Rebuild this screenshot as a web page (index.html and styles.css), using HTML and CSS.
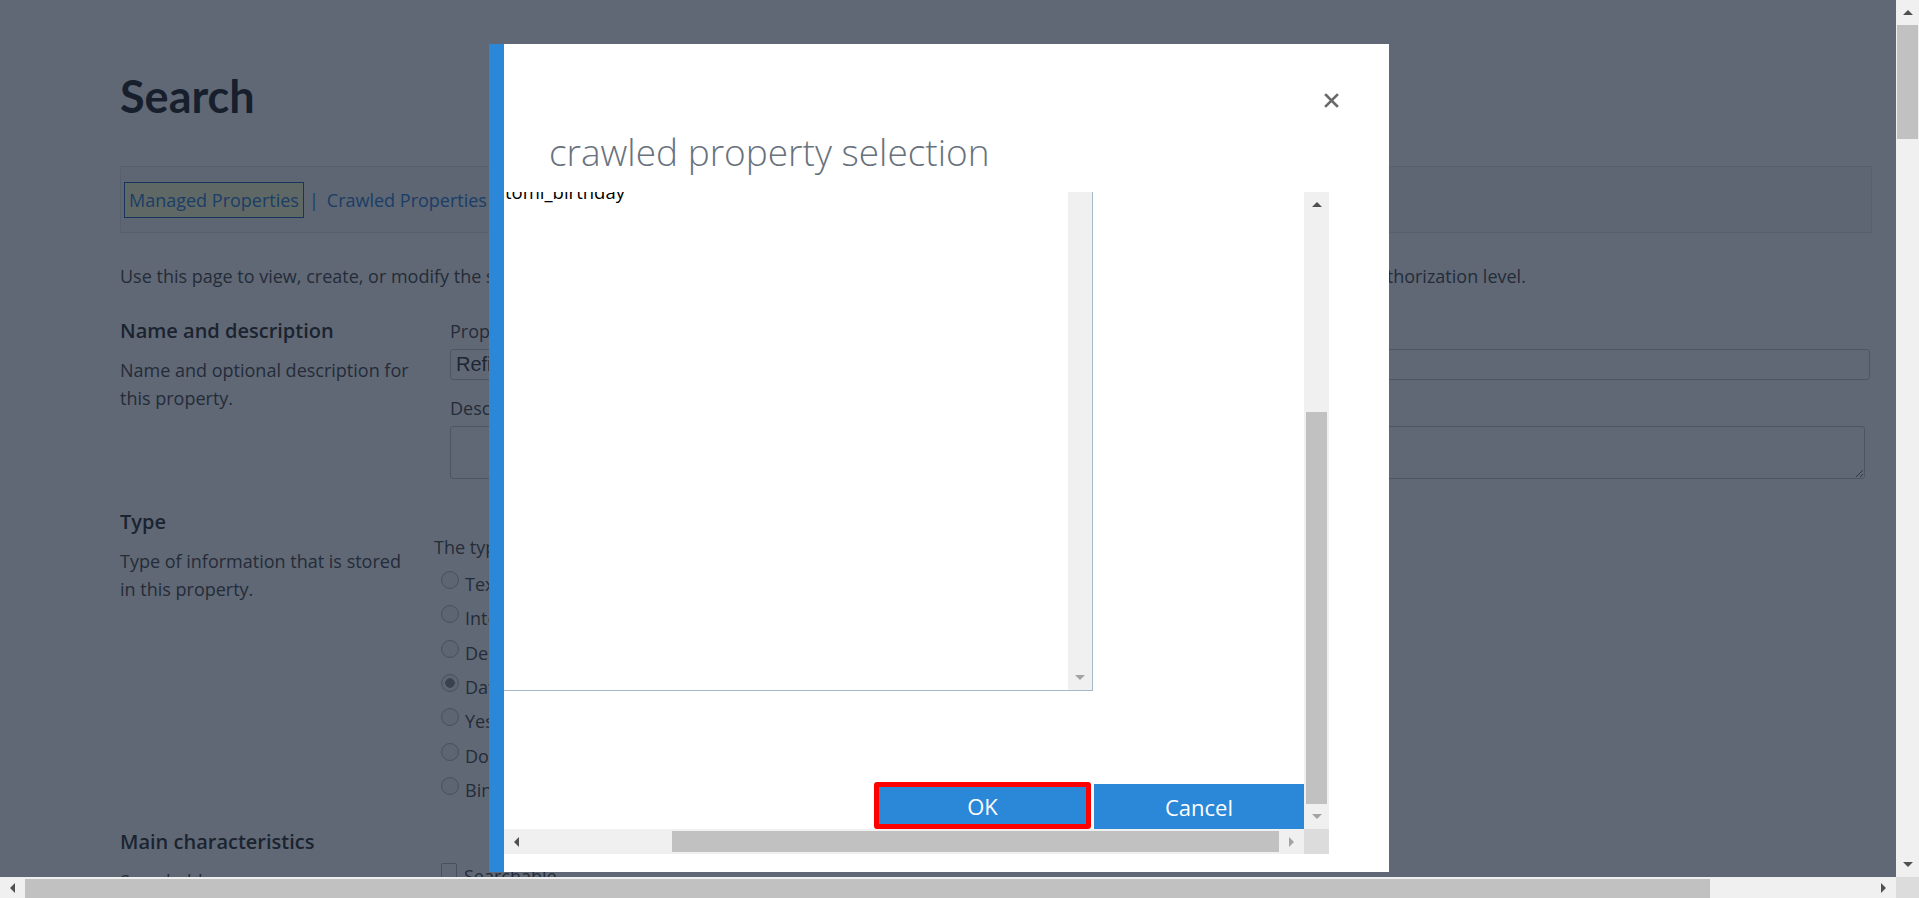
FILE: index.html
```html
<!DOCTYPE html>
<html lang="en">
<head>
<meta charset="utf-8">
<title>Search - Edit Managed Property</title>
<link rel="stylesheet" href="styles.css">
</head>
<body>
<div class="window">
  <div class="viewport">
    <main class="page">
      <h1 class="page-title">Search</h1>
      <nav class="tabbar">
        <a class="tab tab-active" href="#">Managed Properties</a>
        <span class="tab-sep">|</span>
        <a class="tab" href="#">Crawled Properties</a>
        <span class="tab-sep">|</span>
        <a class="tab" href="#">Categories</a>
      </nav>
      <p class="intro">Use this page to view, create, or modify the settings of a managed property. The settings which you can change for this property will depend on your authorization level.</p>

      <section class="section section-name">
        <div class="section-info">
          <h3>Name and description</h3>
          <p>Name and optional description for this property.</p>
        </div>
        <div class="section-fields">
          <label class="field-label" for="propname">Property name:</label>
          <input class="text-input" id="propname" type="text" value="RefinableDate00">
          <label class="field-label field-label-gap" for="propdesc">Description:</label>
          <textarea class="text-area" id="propdesc"></textarea>
        </div>
      </section>

      <section class="section section-type">
        <div class="section-info">
          <h3>Type</h3>
          <p>Type of information that is stored in this property.</p>
        </div>
        <div class="section-fields fields-type">
          <p class="fields-intro">The type of information in this property:</p>
          <div class="radio-list">
            <label class="radio-row"><input type="radio" name="ptype" disabled><span>Text</span></label>
            <label class="radio-row"><input type="radio" name="ptype" disabled><span>Integer</span></label>
            <label class="radio-row"><input type="radio" name="ptype" disabled><span>Decimal</span></label>
            <label class="radio-row"><input type="radio" name="ptype" disabled checked><span>Date and Time</span></label>
            <label class="radio-row"><input type="radio" name="ptype" disabled><span>Yes/No</span></label>
            <label class="radio-row"><input type="radio" name="ptype" disabled><span>Double precision float</span></label>
            <label class="radio-row"><input type="radio" name="ptype" disabled><span>Binary</span></label>
          </div>
        </div>
      </section>

      <section class="section section-main">
        <div class="section-info">
          <h3>Main characteristics</h3>
          <p class="info-label">Searchable:</p>
        </div>
        <div class="section-fields fields-main">
          <label class="check-row"><input type="checkbox"><span>Searchable</span></label>
        </div>
      </section>
    </main>

    <div class="overlay"></div>

    <div class="dialog" role="dialog" aria-label="crawled property selection">
      <div class="dlg-accent"></div>
      <div class="dlg-main">
        <div class="dlg-header">
          <h2 class="dlg-title">crawled property selection</h2>
          <button class="dlg-close" type="button" aria-label="Close">
            <svg width="15" height="15" viewBox="0 0 15 15"><path d="M2 2 L13 13 M13 2 L2 13" stroke="#6a6a6a" stroke-width="2.6" stroke-linecap="square" fill="none"/></svg>
          </button>
        </div>
        <div class="dlg-body">
          <div class="scroll-view">
            <div class="listbox">
              <div class="lb-options">
                <div class="lb-option">tomi_birthday</div>
              </div>
              <div class="lb-scroll">
                <span class="arrow arrow-down arrow-dim"></span>
              </div>
            </div>
            <div class="dlg-actions">
              <button class="btn btn-ok" type="button">OK</button>
              <button class="btn btn-cancel" type="button">Cancel</button>
            </div>
          </div>
          <div class="sbar sbar-v dlg-vbar">
            <span class="sb-btn"><span class="arrow arrow-up"></span></span>
            <span class="dlg-vbar-gap"></span>
            <span class="sb-thumb dlg-vthumb"></span>
            <span class="sb-btn"><span class="arrow arrow-down arrow-dim"></span></span>
          </div>
          <div class="sbar sbar-h dlg-hbar">
            <span class="sb-btn"><span class="arrow arrow-left"></span></span>
            <span class="dlg-hbar-gap"></span>
            <span class="sb-thumb dlg-hthumb"></span>
            <span class="sb-btn"><span class="arrow arrow-right arrow-dim"></span></span>
          </div>
          <div class="sb-corner"></div>
        </div>
      </div>
    </div>
  </div>

  <div class="sbar sbar-v win-vbar">
    <span class="sb-btn win-btn"><span class="arrow arrow-up"></span></span>
    <span class="sb-thumb win-vthumb"></span>
    <span class="sb-fill"></span>
    <span class="sb-btn win-btn"><span class="arrow arrow-down"></span></span>
  </div>
  <div class="sbar sbar-h win-hbar">
    <span class="sb-btn win-btn"><span class="arrow arrow-left"></span></span>
    <span class="sb-thumb win-hthumb"></span>
    <span class="sb-fill"></span>
    <span class="sb-btn win-btn"><span class="arrow arrow-right"></span></span>
  </div>
  <div class="sb-corner"></div>
</div>
</body>
</html>
```

FILE: styles.css
```css
* { box-sizing: border-box; }

html, body {
  margin: 0;
  height: 100%;
  overflow: hidden;
}

body {
  font-family: "Open Sans", "Noto Sans", sans-serif;
  background: #fff;
}

.window {
  display: grid;
  grid-template-columns: 1896px 23px;
  grid-template-rows: 877px 21px;
  width: 1919px;
  height: 898px;
}

.viewport {
  position: relative;
  overflow: hidden;
  background: #fff;
}

/* ---------- underlying page ---------- */
.page {
  padding: 69px 24px 0 120px;
  color: #444;
  font-size: 18px;
}

.page-title {
  font-family: Lato, "Open Sans", sans-serif;
  font-weight: 700;
  font-size: 45px;
  line-height: 54px;
  margin: 0 0 43px;
  color: #1c1c1c;
}

.tabbar {
  height: 67px;
  border: 1px solid #e2e2e2;
  background: #f7f7f7;
  padding: 15px 3px;
  display: flex;
  align-items: flex-start;
}

.tab {
  color: #2a7bd0;
  text-decoration: none;
  line-height: 34px;
  padding: 0 4px;
  border: 1px solid transparent;
}

.tab-active {
  border-color: #1f5fb8;
  background: #ffffcc;
}

.tab-sep {
  color: #2a7bd0;
  line-height: 36px;
  margin: 0 3px 0 5px;
}

.intro {
  margin: 29px 0 0;
  line-height: 28px;
  white-space: nowrap;
}

.section {
  display: grid;
  grid-template-columns: 314px 1fr;
}

.section-name { margin-top: 27px; }
.section-type { margin-top: 29px; }
.section-main { margin-top: 21px; }

.section-info h3 {
  margin: 0;
  font-size: 20px;
  font-weight: 600;
  line-height: 28px;
  color: #2a2a2a;
}

.section-info p {
  margin: 11px 0 0;
  width: 298px;
  line-height: 28px;
}

.section-info .info-label { margin-top: 11px; }

.section-fields {
  padding-left: 16px;
  display: flex;
  flex-direction: column;
  align-items: flex-start;
}

.field-label {
  line-height: 28px;
}

.field-label-gap { margin-top: 14px; }

.text-input {
  margin-top: 4px;
  width: 1420px;
  height: 31px;
  border: 1px solid #c4c4c4;
  border-radius: 3px;
  padding: 0 5px;
  font-family: "Liberation Sans", Arial, sans-serif;
  font-size: 20px;
  color: #333;
  background: #fff;
}

.text-area {
  margin-top: 4px;
  width: 1415px;
  height: 53px;
  border: 1px solid #c4c4c4;
  border-radius: 3px;
  resize: both;
  background: #fff;
}

.fields-type {
  padding-left: 0;
  padding-top: 25px;
}

.fields-intro {
  margin: 0;
  line-height: 28px;
}

.radio-list {
  margin-top: 6px;
  padding-left: 7px;
}

.radio-row {
  display: flex;
  align-items: flex-start;
  height: 34.33px;
  line-height: 34.33px;
}

.radio-row input {
  appearance: none;
  width: 18px;
  height: 18px;
  margin: 4px 6px 0 0;
  border: 1px solid #b3b3b3;
  border-radius: 50%;
  background: #f4f4f4;
}

.radio-row input:checked {
  background: radial-gradient(circle, #8a8a8a 0 4.5px, #f4f4f4 5px);
}

.fields-main {
  padding-left: 7px;
  padding-top: 34px;
}

.check-row {
  display: flex;
  align-items: flex-start;
  line-height: 28px;
}

.check-row input {
  appearance: none;
  width: 16px;
  height: 16px;
  margin: 1px 7px 0 0;
  border: 1px solid #b3b3b3;
  border-radius: 2px;
  background: #fff;
}

.overlay {
  position: absolute;
  inset: 0;
  background: rgba(20, 32, 52, 0.68);
}

/* ---------- dialog ---------- */
.dialog {
  position: absolute;
  left: 489px;
  top: 44px;
  width: 900px;
  height: 828px;
  background: #fff;
  display: flex;
}

.dlg-accent {
  width: 15px;
  background: #2b88d8;
}

.dlg-main {
  flex: 1;
  display: flex;
  flex-direction: column;
}

.dlg-header {
  height: 148px;
  display: flex;
  justify-content: space-between;
  align-items: flex-start;
  padding: 49px 50px 0 45px;
}

.dlg-title {
  margin: 33px 0 0;
  font-weight: 300;
  font-size: 37px;
  line-height: 52px;
  color: #68727d;
}

.dlg-close {
  width: 15px;
  height: 15px;
  padding: 0;
  border: 0;
  background: none;
  display: block;
}

.dlg-close svg { display: block; }

.dlg-body {
  display: grid;
  grid-template-columns: 800px 25px;
  grid-template-rows: 637px 25px;
  width: 825px;
}

.scroll-view {
  overflow: hidden;
  display: flex;
  flex-direction: column;
}

.listbox {
  flex-shrink: 0;
  margin: -22px 0 0 -1px;
  width: 590px;
  height: 521px;
  border: 1px solid #a9b8c8;
  display: flex;
  background: #fff;
}

.lb-options {
  flex: 1;
  padding: 9px 0 0 1px;
  font-size: 18.5px;
  line-height: 24px;
  color: #000;
}

.lb-scroll {
  width: 24px;
  background: #f0f0f0;
  display: flex;
  flex-direction: column;
  justify-content: flex-end;
  align-items: center;
  padding-bottom: 10px;
}

.dlg-actions {
  margin-top: auto;
  display: flex;
  justify-content: flex-end;
  align-items: flex-end;
  gap: 3px;
}

.btn {
  background: #2b88d8;
  color: #fff;
  font-family: "Open Sans", sans-serif;
  font-size: 22px;
  border: 0;
  padding: 0;
}

.btn-ok {
  width: 217px;
  height: 47px;
  border: 5px solid #ff0000;
  border-radius: 3px;
}

.btn-cancel {
  width: 210px;
  height: 45px;
}

/* ---------- scrollbars ---------- */
.sbar {
  background: #f0f0f0;
  display: flex;
}

.sbar-v { flex-direction: column; }
.sbar-h { flex-direction: row; }

.sb-btn {
  flex: 0 0 25px;
  display: flex;
  align-items: center;
  justify-content: center;
}

.sb-thumb { background: #c1c1c1; }
.sb-fill { flex: 1; }
.sb-corner { background: #dcdcdc; }

.dlg-vbar { align-items: center; }
.dlg-vbar-gap { flex: 0 0 195px; }
.dlg-vthumb { flex: 0 0 392px; width: 21px; }

.dlg-hbar { align-items: center; }
.dlg-hbar-gap { flex: 0 0 143px; }
.dlg-hthumb { flex: 0 0 607px; height: 21px; }

.win-vbar { align-items: center; }
.win-vthumb { flex: 0 0 114px; width: 21px; }

.win-hbar { align-items: flex-end; }
.win-hbar .sb-btn { align-self: stretch; }
.win-hthumb { flex: 0 0 1685px; height: 19px; }

.arrow {
  width: 0;
  height: 0;
  display: block;
  color: #505050;
}

.arrow-dim { color: #a3a3a3; }

.arrow-up {
  border-left: 5px solid transparent;
  border-right: 5px solid transparent;
  border-bottom: 5px solid currentColor;
}

.arrow-down {
  border-left: 5px solid transparent;
  border-right: 5px solid transparent;
  border-top: 5px solid currentColor;
}

.arrow-left {
  border-top: 5px solid transparent;
  border-bottom: 5px solid transparent;
  border-right: 5px solid currentColor;
}

.arrow-right {
  border-top: 5px solid transparent;
  border-bottom: 5px solid transparent;
  border-left: 5px solid currentColor;
}
```
